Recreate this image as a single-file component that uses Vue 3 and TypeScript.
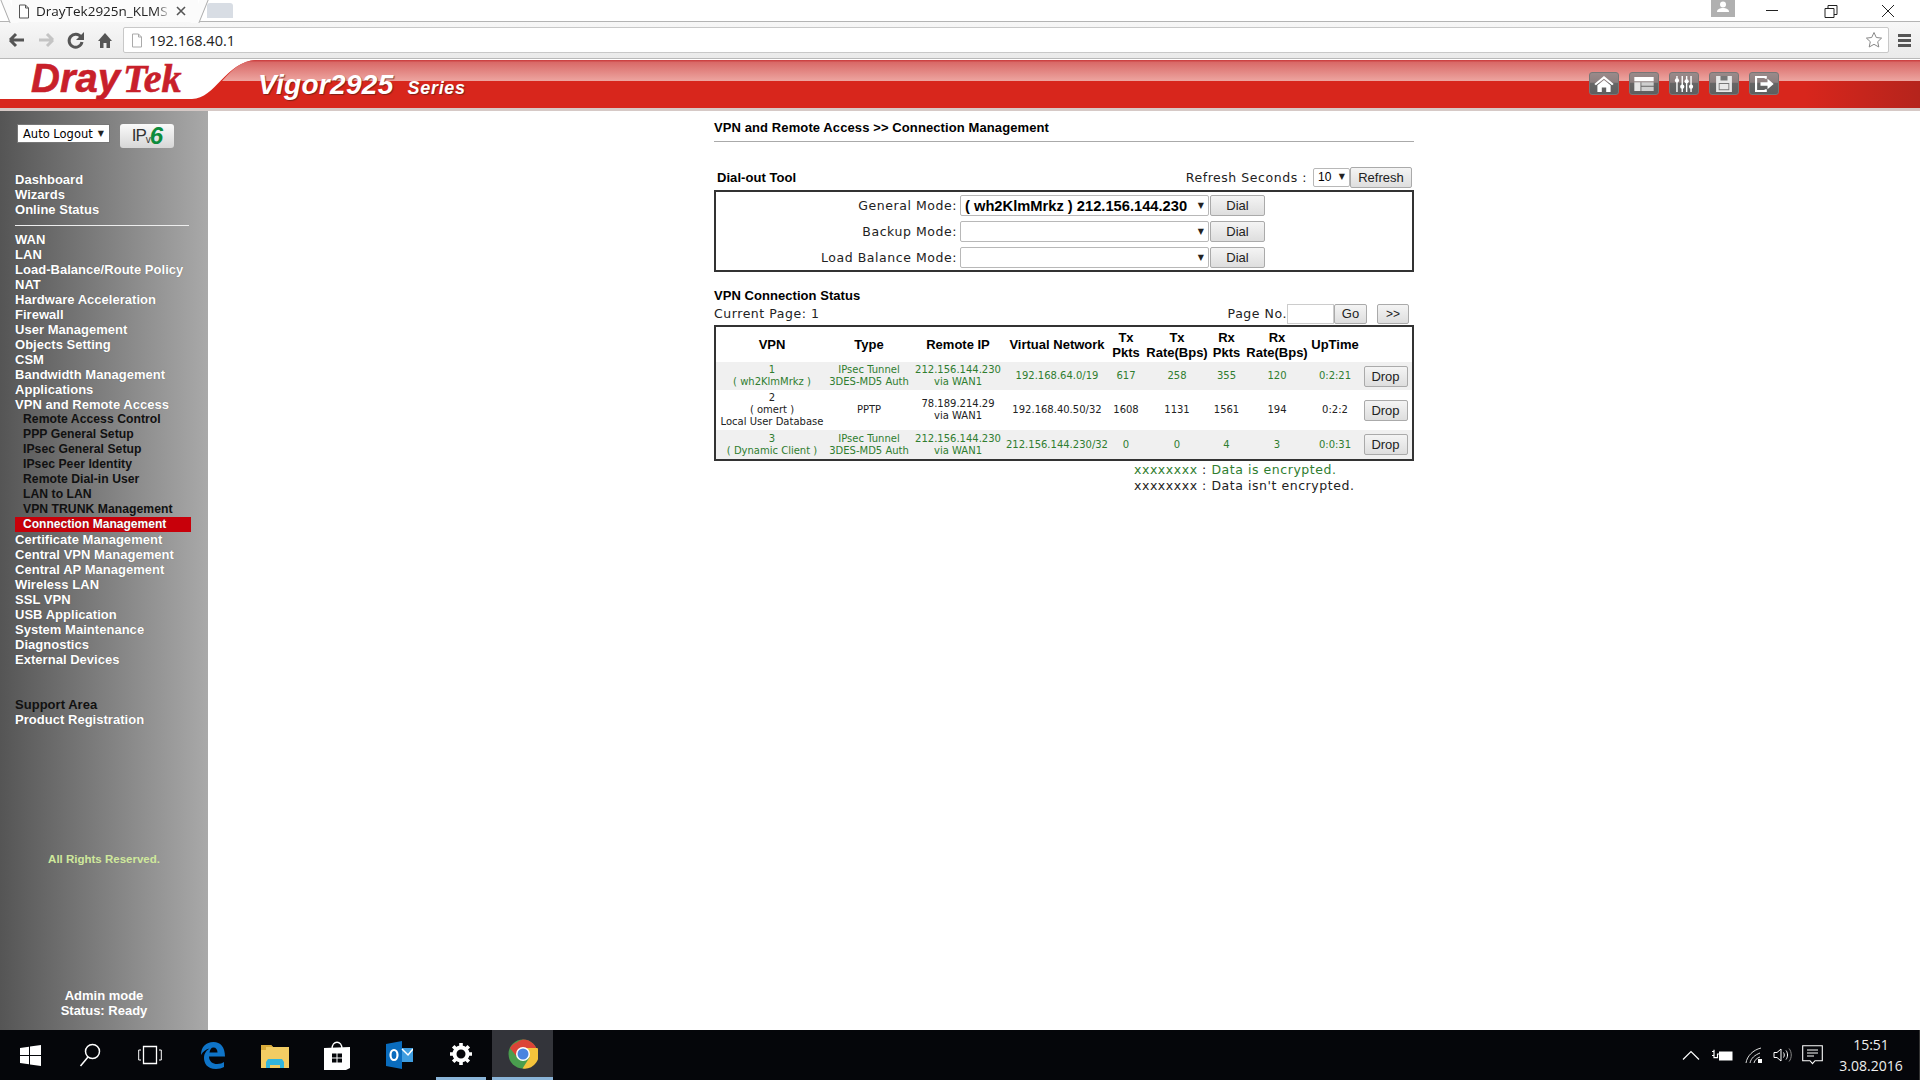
<script setup lang="ts">
type NavItem = { label: string; kind?: 'sub' | 'active' | 'dark' }

const topNav: NavItem[] = [{ label: 'Dashboard' }, { label: 'Wizards' }, { label: 'Online Status' }]

const mainNav: NavItem[] = [
  { label: 'WAN' },
  { label: 'LAN' },
  { label: 'Load-Balance/Route Policy' },
  { label: 'NAT' },
  { label: 'Hardware Acceleration' },
  { label: 'Firewall' },
  { label: 'User Management' },
  { label: 'Objects Setting' },
  { label: 'CSM' },
  { label: 'Bandwidth Management' },
  { label: 'Applications' },
  { label: 'VPN and Remote Access' },
  { label: 'Remote Access Control', kind: 'sub' },
  { label: 'PPP General Setup', kind: 'sub' },
  { label: 'IPsec General Setup', kind: 'sub' },
  { label: 'IPsec Peer Identity', kind: 'sub' },
  { label: 'Remote Dial-in User', kind: 'sub' },
  { label: 'LAN to LAN', kind: 'sub' },
  { label: 'VPN TRUNK Management', kind: 'sub' },
  { label: 'Connection Management', kind: 'active' },
  { label: 'Certificate Management' },
  { label: 'Central VPN Management' },
  { label: 'Central AP Management' },
  { label: 'Wireless LAN' },
  { label: 'SSL VPN' },
  { label: 'USB Application' },
  { label: 'System Maintenance' },
  { label: 'Diagnostics' },
  { label: 'External Devices' },
]

const supportNav: NavItem[] = [{ label: 'Support Area', kind: 'dark' }, { label: 'Product Registration' }]

const dialRows = [
  { label: 'General Mode:', value: '( wh2KlmMrkz ) 212.156.144.230' },
  { label: 'Backup Mode:', value: '' },
  { label: 'Load Balance Mode:', value: '' },
]

const columns = [
  { title: ['VPN'], width: 112 },
  { title: ['Type'], width: 82 },
  { title: ['Remote IP'], width: 96 },
  { title: ['Virtual Network'], width: 102 },
  { title: ['Tx', 'Pkts'], width: 36 },
  { title: ['Tx', 'Rate(Bps)'], width: 66 },
  { title: ['Rx', 'Pkts'], width: 33 },
  { title: ['Rx', 'Rate(Bps)'], width: 68 },
  { title: ['UpTime'], width: 48 },
  { title: [''], width: 53 },
]

const connections = [
  {
    vpn: ['1', '( wh2KlmMrkz )'],
    type: ['IPsec Tunnel', '3DES-MD5 Auth'],
    remote: ['212.156.144.230', 'via WAN1'],
    net: '192.168.64.0/19',
    stats: ['617', '258', '355', '120', '0:2:21'],
    encrypted: true,
  },
  {
    vpn: ['2', '( omert )', 'Local User Database'],
    type: ['PPTP'],
    remote: ['78.189.214.29', 'via WAN1'],
    net: '192.168.40.50/32',
    stats: ['1608', '1131', '1561', '194', '0:2:2'],
    encrypted: false,
  },
  {
    vpn: ['3', '( Dynamic Client )'],
    type: ['IPsec Tunnel', '3DES-MD5 Auth'],
    remote: ['212.156.144.230', 'via WAN1'],
    net: '212.156.144.230/32',
    stats: ['0', '0', '4', '3', '0:0:31'],
    encrypted: true,
  },
]
</script>

<template>
  <div class="screen">
    <div class="tabstrip">
      <div class="tab">
        <svg class="tab-doc" width="12" height="15" viewBox="0 0 12 15">
          <path d="M1.5 1h6l3 3v10h-9z M7.5 1v3h3" fill="#fff" stroke="#555" stroke-width="1" />
        </svg>
        <span class="tab-title">DrayTek2925n_KLMS</span>
        <svg class="tab-close" width="10" height="10" viewBox="0 0 10 10">
          <path d="M1 1l8 8M9 1l-8 8" stroke="#555" stroke-width="1.6" />
        </svg>
      </div>
      <div class="newtab"></div>
      <div class="winbtns">
        <div class="win-user">
          <svg width="14" height="12" viewBox="0 0 14 12">
            <circle cx="7" cy="3.5" r="3" fill="#fff" />
            <path d="M1 11c0-3 3-4 6-4s6 1 6 4z" fill="#fff" />
          </svg>
        </div>
        <svg class="win-ic" width="58" height="22" viewBox="0 0 58 22">
          <path d="M23 10.5h12" stroke="#222" stroke-width="1" />
        </svg>
        <svg class="win-ic" width="58" height="22" viewBox="0 0 58 22">
          <path d="M24 8.500h9v9h-9z M27 8.500v-3h9v9h-3" fill="none" stroke="#222" stroke-width="1" />
        </svg>
        <svg class="win-ic" width="58" height="22" viewBox="0 0 58 22">
          <path d="M23 5l12 12M35 5l-12 12" stroke="#222" stroke-width="1" />
        </svg>
      </div>
    </div>

    <div class="toolbar">
      <svg width="112" height="24" viewBox="0 0 112 24" class="nav-ic">
        <path d="M10 12h14M10 12l6-6M10 12l6 6" fill="none" stroke="#555" stroke-width="3" />
        <path d="M39 12h14M53 12l-6-6M53 12l-6 6" fill="none" stroke="#c4c4c4" stroke-width="3" />
        <path d="M81 9a6.500 6.500 0 1 0 1 5" fill="none" stroke="#555" stroke-width="3" />
        <path d="M84 4v8h-8z" fill="#555" />
        <path d="M98 13l7-8 7 8h-2v7h-3.500v-5h-3v5H100v-7z" fill="#555" />
      </svg>
      <div class="omnibox">
        <svg width="12" height="15" viewBox="0 0 12 15">
          <path d="M1.500 1h6l3 3v10h-9z M7.500 1v3h3" fill="#fff" stroke="#aaa" stroke-width="1" />
        </svg>
        <span class="url">192.168.40.1</span>
        <svg class="star" width="18" height="18" viewBox="0 0 18 18">
          <path d="M9 1.500l2.300 5 5.300.6-3.900 3.600 1.100 5.300L9 13.300 4.200 16l1.100-5.300L1.400 7.100l5.300-.6z" fill="#fff" stroke="#888" stroke-width="1" />
        </svg>
      </div>
      <div class="menu-ic"><i></i><i></i><i></i></div>
    </div>

    <header class="brand">
      <svg class="brand-bg" width="1920" height="52" viewBox="0 0 1920 52" preserveAspectRatio="none">
        <defs>
          <linearGradient id="gloss" x1="0" y1="0" x2="0" y2="1">
            <stop offset="0" stop-color="#c9393a" />
            <stop offset="0.12" stop-color="#d96a68" />
            <stop offset="1" stop-color="#eda5a0" />
          </linearGradient>
          <linearGradient id="shade" x1="0" y1="0" x2="1" y2="0">
            <stop offset="0" stop-color="#d8261c" />
            <stop offset="0.94" stop-color="#d8261c" />
            <stop offset="1" stop-color="#b5241c" />
          </linearGradient>
        </defs>
        <path d="M0 40H192C216 40 226 1 258 1H1920V50H0Z" fill="url(#shade)" />
        <path d="M222 22C234 9 242 1 258 1H1920V22Z" fill="url(#gloss)" />
        <path d="M0 49h1920v3H0z" fill="#d6c9c6" />
      </svg>
      <div class="logo"><span class="logo-dray">Dray</span><span class="logo-tek">Tek</span></div>
      <div class="model">Vigor2925<span class="model-series">Series</span></div>
      <div class="brand-icons">
        <button class="hicon" type="button" aria-label="Home">
          <svg width="24" height="20" viewBox="0 0 24 20">
            <path d="M1 10L12 1l11 9-1.800 1.500L12 4 2.800 11.500z" fill="#fff" />
            <path d="M4.500 11.500L12 5.500l7.500 6V19h-5v-5h-5v5h-5z" fill="#fff" />
          </svg>
        </button>
        <button class="hicon" type="button" aria-label="Layout">
          <svg width="24" height="20" viewBox="0 0 24 20">
            <path d="M1 2h22v5H1z" fill="#fff" />
            <path d="M1 8h7v10H1z" fill="#e6e6e6" />
            <path d="M9 8h14v4H9zM9 13h14v5H9z" fill="#cfcfcf" />
          </svg>
        </button>
        <button class="hicon" type="button" aria-label="Settings">
          <svg width="24" height="20" viewBox="0 0 24 20">
            <path d="M4 1v18M10 1v18M15 1v18M20 1v18" stroke="#fff" stroke-width="1.600" />
            <circle cx="4" cy="6" r="2.400" fill="#fff" />
            <circle cx="10" cy="13" r="2.400" fill="#fff" />
            <circle cx="15" cy="7" r="2.400" fill="#fff" />
            <circle cx="20" cy="13" r="2.400" fill="#fff" />
          </svg>
        </button>
        <button class="hicon" type="button" aria-label="Save">
          <svg width="24" height="20" viewBox="0 0 24 20">
            <path d="M3 1h18v18H3z" fill="#e8e8e8" />
            <path d="M8 1h8v5H8z" fill="#777" />
            <path d="M6 9h12v8H6z" fill="#777" />
            <path d="M7 10h10v6H7z" fill="#e8e8e8" />
          </svg>
        </button>
        <button class="hicon" type="button" aria-label="Logout">
          <svg width="24" height="20" viewBox="0 0 24 20">
            <path d="M14 4V2H3v16h11v-2" fill="none" stroke="#fff" stroke-width="2.400" />
            <path d="M8 8h8V4l7 6-7 6v-4H8z" fill="#fff" />
          </svg>
        </button>
      </div>
    </header>

    <div class="body">
      <aside class="sidebar">
        <div class="side-top">
          <div class="logout-select">Auto Logout<span class="arrow">▼</span></div>
          <div class="ipv6">IP<small>v</small><em>6</em></div>
        </div>
        <nav class="nav-group">
          <a v-for="item in topNav" :key="item.label" class="nav-item">{{ item.label }}</a>
        </nav>
        <hr class="side-rule" />
        <nav class="nav-group">
          <a
            v-for="item in mainNav"
            :key="item.label"
            class="nav-item"
            :class="item.kind ? `nav-item--${item.kind}` : ''"
            >{{ item.label }}</a
          >
        </nav>
        <nav class="nav-group nav-support">
          <a
            v-for="item in supportNav"
            :key="item.label"
            class="nav-item"
            :class="item.kind ? `nav-item--${item.kind}` : ''"
            >{{ item.label }}</a
          >
        </nav>
        <div class="rights">All Rights Reserved.</div>
        <div class="side-status">
          <div>Admin mode</div>
          <div>Status: Ready</div>
        </div>
      </aside>

      <main class="content">
        <h1 class="page-title">VPN and Remote Access &gt;&gt; Connection Management</h1>

        <div class="dial-head">
          <span class="section-name">Dial-out Tool</span>
          <div class="refresh">
            <span class="plain">Refresh Seconds :</span>
            <div class="sel sel--small">10<span class="arrow">▼</span></div>
            <button class="btn btn--refresh" type="button">Refresh</button>
          </div>
        </div>
        <div class="dial-box">
          <div v-for="row in dialRows" :key="row.label" class="dial-row">
            <span class="plain dial-label">{{ row.label }}</span>
            <div class="sel sel--wide">
              <b>{{ row.value }}</b><span class="arrow">▼</span>
            </div>
            <button class="btn btn--dial" type="button">Dial</button>
          </div>
        </div>

        <div class="section-name status-name">VPN Connection Status</div>
        <div class="page-row">
          <span class="plain">Current Page: 1</span>
          <div class="pager">
            <span class="plain">Page No.</span>
            <input class="page-input" type="text" />
            <button class="btn btn--go" type="button">Go</button>
            <button class="btn btn--next" type="button">&gt;&gt;</button>
          </div>
        </div>
        <table class="vpn-table">
          <colgroup>
            <col v-for="(col, i) in columns" :key="i" :style="{ width: col.width + 'px' }" />
          </colgroup>
          <thead>
            <tr>
              <th v-for="(col, i) in columns" :key="i">
                <div v-for="line in col.title" :key="line">{{ line }}</div>
              </th>
            </tr>
          </thead>
          <tbody>
            <tr
              v-for="(row, i) in connections"
              :key="i"
              :class="{ 'row--enc': row.encrypted, 'row--shade': i % 2 === 0 }"
            >
              <td><div v-for="line in row.vpn" :key="line">{{ line }}</div></td>
              <td><div v-for="line in row.type" :key="line">{{ line }}</div></td>
              <td><div v-for="line in row.remote" :key="line">{{ line }}</div></td>
              <td>{{ row.net }}</td>
              <td v-for="(stat, j) in row.stats" :key="j">{{ stat }}</td>
              <td><button class="btn btn--drop" type="button">Drop</button></td>
            </tr>
          </tbody>
        </table>
        <div class="legend">
          <div><span class="green">xxxxxxxx</span> : <span class="green">Data is encrypted.</span></div>
          <div>xxxxxxxx : Data isn't encrypted.</div>
        </div>
      </main>
    </div>

    <footer class="taskbar">
      <div class="task-apps">
        <div class="task-cell">
          <svg width="21" height="21" viewBox="0 0 21 21">
            <path d="M0 3l9-1.300V10H0zM10 1.500L21 0v10H10zM0 11h9v8.300L0 18zM10 11h11v10l-11-1.500z" fill="#fff" />
          </svg>
        </div>
        <div class="task-cell">
          <svg width="22" height="24" viewBox="0 0 22 24">
            <circle cx="13.500" cy="8.500" r="7" fill="none" stroke="#fff" stroke-width="1.500" />
            <path d="M9 14L1.500 23" stroke="#fff" stroke-width="1.500" />
          </svg>
        </div>
        <div class="task-cell">
          <svg width="24" height="20" viewBox="0 0 24 20">
            <path d="M5.500 1.500h13v17h-13z" fill="none" stroke="#fff" stroke-width="1.300" />
            <path d="M3 5H.7v10H3M21 5h2.300v10H21" fill="none" stroke="#fff" stroke-width="1" />
          </svg>
        </div>
        <div class="task-cell">
          <svg width="26" height="28" viewBox="0 0 26 28">
            <path
              d="M1 14C1 6 6 1 13.500 1 20.500 1 25 6 25 15.500H9c0 5 4 7.500 8 7.500 3 0 5.500-.8 7-2v5c-2 1.300-5 2-8 2C7 28 4 22 4 17 4 12 7 9 9.500 7.500 6 8 3 10.500 1 14zM9.500 11.500h8c0-3-1.500-5-4-5s-3.500 2-4 5z"
              fill="#0f74c8"
              fill-rule="evenodd"
            />
          </svg>
        </div>
        <div class="task-cell">
          <svg width="28" height="26" viewBox="0 0 28 26">
            <path d="M0 3h10l2 2h16v21H0z" fill="#f2cc63" />
            <path d="M0 3h10l2 2H5v3H0z" fill="#d9ab3a" />
            <path d="M7 17h14l2 3v6h-4v-3H9v3H5v-6z" fill="#33b5dc" />
          </svg>
        </div>
        <div class="task-cell">
          <svg width="26" height="30" viewBox="0 0 26 30">
            <path d="M8 9c0-9 10-9 10 0" fill="none" stroke="#fff" stroke-width="1.500" />
            <path d="M0 8l26-1v21l-4 2H0z" fill="#fff" />
            <path d="M8 13.500h4.500v4H8zM13.500 13.500H18v4h-4.500zM8 18.500h4.500v4H8zM13.500 18.500H18v4h-4.500z" fill="#05060a" />
          </svg>
        </div>
        <div class="task-cell">
          <svg width="27" height="28" viewBox="0 0 27 28">
            <path d="M0 3l16-3v28L0 25z" fill="#0a6cbe" />
            <path d="M16 7h11v14H16z" fill="#3f9de0" />
            <path d="M16 8l6 6 5-6" fill="none" stroke="#fff" stroke-width="1.500" />
            <ellipse cx="8" cy="14" rx="3.500" ry="5" fill="none" stroke="#fff" stroke-width="2.200" />
          </svg>
        </div>
        <div class="task-cell task-cell--open">
          <svg width="24" height="24" viewBox="0 0 24 24">
            <circle cx="12" cy="12" r="6.500" fill="none" stroke="#fff" stroke-width="4" />
            <path
              d="M12 1v5M12 18v5M1 12h5M18 12h5M4.200 4.200l3.600 3.600M16.200 16.200l3.600 3.600M4.200 19.800l3.600-3.600M16.200 7.800l3.600-3.600"
              stroke="#fff"
              stroke-width="3.600"
            />
          </svg>
        </div>
        <div class="task-cell task-cell--active">
          <svg width="30" height="30" viewBox="0 0 30 30">
            <circle cx="15" cy="15" r="14.500" fill="#4a9e4e" />
            <path d="M15 .500A14.500 14.500 0 0 1 29.500 15H15L8 4A14.500 14.500 0 0 1 15 .500z" fill="#dc4437" />
            <path d="M15 9h14.500a14.500 14.500 0 0 1-15 20.500l7-11z" fill="#f5c33b" />
            <path d="M8 3.500L15 15l-6 3L2 9a14.500 14.500 0 0 1 6-5.500z" fill="#dc4437" />
            <circle cx="15" cy="15" r="7" fill="#fff" />
            <circle cx="15" cy="15" r="5.500" fill="#4a84e0" />
          </svg>
        </div>
      </div>
      <div class="tray">
        <svg width="18" height="10" viewBox="0 0 18 10">
          <path d="M1 9.500L9 1.500l8 8" fill="none" stroke="#fff" stroke-width="1.200" />
        </svg>
        <svg width="21" height="12" viewBox="0 0 21 12">
          <path d="M7 2.500h13.500v9H7z" fill="#fff" />
          <path d="M0 2.500h2M0 6.500h2M2 .7v8h3.500V5H7" fill="none" stroke="#fff" stroke-width="1.200" />
        </svg>
        <svg width="18" height="17" viewBox="0 0 18 17">
          <path d="M1 16C2 9 8 3 16 1M5 16c1-5 5-8 10-10M9 16c.6-3 3-5 6-6" fill="none" stroke="#ddd" stroke-width="1" />
          <path d="M13 12h4v4h-4z" fill="#fff" />
        </svg>
        <svg class="tray-vol" width="20" height="16" viewBox="0 0 20 16">
          <path d="M1 5.500h3L8 2v12l-4-3.500H1z" fill="none" stroke="#fff" stroke-width="1" />
          <path d="M10.500 5.500c1 1.500 1 3.500 0 5M13 3.500c2 2.500 2 6.500 0 9" fill="none" stroke="#fff" stroke-width="1" />
          <path d="M16 1.500c3 3.500 3 9.500 0 13" fill="none" stroke="#888" stroke-width="1" />
        </svg>
        <svg width="21" height="20" viewBox="0 0 21 20">
          <path d="M.700.700h19.600v15H13l-2.500 3-2.500-3H.700z" fill="none" stroke="#fff" stroke-width="1.100" />
          <path d="M5 5h11M5 8h11M5 11h7" stroke="#fff" stroke-width="1" />
        </svg>
        <div class="clock">
          <div>15:51</div>
          <div>3.08.2016</div>
        </div>
      </div>
    </footer>
  </div>
</template>

<style>
html,
body {
  margin: 0;
  background: #fff;
  overflow: hidden;
}
</style>

<style scoped>
.screen {
  width: 1920px;
  height: 1080px;
  display: flex;
  flex-direction: column;
  overflow: hidden;
  font-family: 'Liberation Sans', Arial, sans-serif;
  color: #000;
  background: #fff;
}

/* browser chrome */
.tabstrip {
  height: 22px;
  display: flex;
  background: #fff;
  box-sizing: border-box;
  border-bottom: 1px solid #b4b4b4;
}

.tab {
  position: relative;
  width: 186px;
  margin-left: 12px;
  height: 22px;
  display: flex;
  align-items: center;
  padding-left: 6px;
  box-sizing: border-box;
  background: #fbfbfb;
}

.tab::before,
.tab::after {
  content: '';
  position: absolute;
  top: 0;
  bottom: -1px;
  width: 8px;
  background: #fbfbfb;
}

.tab::before {
  left: -7px;
  border-left: 1px solid #aaa;
  transform: skewX(22deg);
}

.tab::after {
  right: -6px;
  border-right: 1px solid #aaa;
  transform: skewX(-22deg);
}

.tab-doc,
.tab-title,
.tab-close {
  position: relative;
  z-index: 1;
}

.tab-title {
  margin-left: 6px;
  width: 136px;
  font-family: 'Open Sans', sans-serif;
  font-size: 13.5px;
  white-space: nowrap;
  overflow: hidden;
  color: #222;
  -webkit-mask-image: linear-gradient(to right, #000 88%, transparent);
  mask-image: linear-gradient(to right, #000 88%, transparent);
}

.tab-close {
  margin-left: 4px;
}

.newtab {
  width: 26px;
  height: 15px;
  margin: 3px 0 0 9px;
  background: #d8dde4;
  border-radius: 3px 3px 0 0;
}

.winbtns {
  margin-left: auto;
  padding-right: 3px;
  display: flex;
  align-items: flex-start;
  height: 21px;
}

.win-user {
  width: 24px;
  height: 17px;
  margin-right: 8px;
  background: #b0b0b0;
  display: flex;
  justify-content: center;
  padding-top: 1px;
  box-sizing: border-box;
}

.win-ic {
  display: block;
}

.toolbar {
  height: 37px;
  display: flex;
  align-items: center;
  background: linear-gradient(#f7f7f7, #eaeaea);
  border-bottom: 1px solid #b9b9b9;
  box-sizing: border-box;
  padding-right: 9px;
}

.nav-ic {
  flex: none;
  margin-right: 11px;
  display: block;
}

.omnibox {
  flex: 1;
  height: 26px;
  display: flex;
  align-items: center;
  padding-left: 7px;
  padding-right: 5px;
  background: #fff;
  border: 1px solid #c8c8c8;
  border-radius: 2px;
  box-sizing: border-box;
}

.url {
  margin-left: 6px;
  font-family: 'Open Sans', sans-serif;
  font-size: 14.5px;
  color: #222;
}

.star {
  margin-left: auto;
}

.menu-ic {
  width: 13px;
  margin-left: 9px;
  display: flex;
  flex-direction: column;
  gap: 2px;
}

.menu-ic i {
  display: block;
  height: 3px;
  background: #555;
}

/* router header */
.brand {
  position: relative;
  height: 52px;
  display: flex;
  align-items: center;
  background: #fff;
  flex: none;
}

.brand-bg {
  position: absolute;
  inset: 0;
}

.logo {
  position: relative;
  margin-left: 31px;
  margin-top: -14px;
  width: 224px;
  color: #c8202a;
  font-size: 40px;
  line-height: 38px;
  white-space: nowrap;
  -webkit-text-stroke: 0.6px #c8202a;
}

.logo-dray {
  font-family: 'Liberation Sans', sans-serif;
  font-weight: 700;
  font-style: italic;
}

.logo-tek {
  margin-left: 3px;
  font-family: 'Liberation Serif', serif;
  font-weight: 700;
  font-style: italic;
}

.model {
  position: relative;
  margin-left: 3px;
  color: #fff;
  font-size: 28px;
  font-weight: 700;
  font-style: italic;
  letter-spacing: 0.3px;
  white-space: nowrap;
  text-shadow: 1px 1px 1px rgba(90, 30, 20, 0.7);
}

.model-series {
  margin-left: 14px;
  font-size: 18px;
  letter-spacing: 0.7px;
}

.brand-icons {
  position: relative;
  margin-left: auto;
  margin-right: 141px;
  margin-top: -3px;
  display: flex;
  gap: 10px;
}

.hicon {
  width: 30px;
  height: 23px;
  padding: 0;
  display: flex;
  align-items: center;
  justify-content: center;
  border: 1px solid #777;
  border-radius: 3px;
  background: linear-gradient(#9a8a8a 0%, #8d7f7f 45%, #666 46%, #5e5e5e 100%);
}

.hicon svg {
  transform: scale(0.88);
}

/* sidebar */
.body {
  flex: 1;
  min-height: 0;
  display: flex;
}

.sidebar {
  width: 208px;
  flex: none;
  display: flex;
  flex-direction: column;
  padding-left: 15px;
  box-sizing: border-box;
  background: linear-gradient(to right, #555, #a9a9a9);
}

.side-top {
  height: 61px;
  display: flex;
  align-items: flex-start;
  padding: 13px 0 0 2px;
  box-sizing: border-box;
}

.logout-select {
  width: 93px;
  height: 19px;
  padding: 0 5px;
  display: flex;
  align-items: center;
  justify-content: space-between;
  box-sizing: border-box;
  background: #fff;
  border: 1px solid #777;
  font-family: 'DejaVu Sans', sans-serif;
  font-size: 11.500px;
}

.arrow {
  font-size: 8px;
  line-height: 1;
  font-family: 'DejaVu Sans', sans-serif;
  color: #222;
}

.ipv6 {
  width: 54px;
  height: 24px;
  margin-left: 10px;
  display: flex;
  align-items: center;
  justify-content: center;
  border-radius: 3px;
  background: linear-gradient(#fafafa, #d6d6d6);
  font-size: 17px;
  color: #333;
  letter-spacing: -1px;
}

.ipv6 small {
  font-size: 10px;
  align-self: flex-end;
  margin-bottom: 3px;
}

.ipv6 em {
  font-size: 24px;
  font-weight: 700;
  color: #0c8c3c;
  line-height: 24px;
}

.nav-group {
  display: flex;
  flex-direction: column;
}

.nav-item {
  height: 15px;
  line-height: 15px;
  font-size: 13px;
  letter-spacing: 0.03px;
  font-weight: 700;
  color: #fff;
  white-space: nowrap;
  text-shadow: 0 0 1px rgba(60, 60, 60, 0.6);
}

.nav-item--sub {
  padding-left: 8px;
  color: #111;
  font-size: 12.200px;
  text-shadow: none;
}

.nav-item--active {
  width: 176px;
  padding-left: 8px;
  box-sizing: border-box;
  background: #c8000a;
  font-size: 12px;
}

.nav-item--dark {
  color: #111;
  text-shadow: none;
}

.side-rule {
  width: 174px;
  height: 1px;
  margin: 8px 0 6px;
  border: 0;
  background: #eee;
  align-self: flex-start;
}

.nav-support {
  margin-top: 30px;
}

.rights {
  margin: 126px 0 0 -15px;
  width: 208px;
  text-align: center;
  font-size: 11.500px;
  font-weight: 700;
  color: #cfe89c;
}

.side-status {
  margin: auto 0 12px -15px;
  width: 208px;
  text-align: center;
  font-size: 13px;
  line-height: 15px;
  font-weight: 700;
  color: #fff;
}

/* main panel */
.content {
  width: 700px;
  margin-left: 506px;
  flex: none;
}

.page-title {
  height: 31px;
  margin: 0;
  padding-top: 9px;
  box-sizing: border-box;
  border-bottom: 1px solid #aaa;
  font-size: 13px;
  letter-spacing: 0.1px;
  line-height: 15px;
  font-weight: 700;
}

.dial-head {
  height: 26px;
  margin-top: 22px;
  display: flex;
  align-items: center;
  justify-content: space-between;
  padding: 0 2px 0 3px;
  box-sizing: border-box;
}

.section-name {
  font-size: 13px;
  letter-spacing: 0.05px;
  font-weight: 700;
}

.plain {
  font-family: 'DejaVu Sans', sans-serif;
  font-size: 12.500px;
  letter-spacing: 0.55px;
  white-space: nowrap;
  color: #222;
}

.refresh {
  display: flex;
  align-items: center;
}

.sel {
  display: flex;
  align-items: center;
  justify-content: space-between;
  box-sizing: border-box;
  background: #fff;
  border: 1px solid #b8b8b8;
  border-radius: 2px;
}

.sel--small {
  width: 37px;
  height: 19px;
  margin-left: 6px;
  padding: 0 4px;
  font-size: 12px;
}

.sel--wide {
  width: 249px;
  height: 21px;
  margin-left: 3px;
  padding: 0 4px;
  font-size: 14.700px;
}

.btn {
  padding: 0;
  font-family: 'Liberation Sans', sans-serif;
  font-size: 12px;
  color: #222;
  background: linear-gradient(#f4f4f4, #dedede);
  border: 1px solid #aaa;
  border-radius: 2px;
  box-sizing: border-box;
}

.btn--refresh {
  width: 62px;
  height: 21px;
  font-size: 13px;
}

.dial-box {
  height: 82px;
  padding: 3px 0 0;
  box-sizing: border-box;
  border: 2px solid #333;
  background: #fff;
  display: flex;
  flex-direction: column;
  gap: 5px;
}

.dial-row {
  height: 21px;
  display: flex;
  align-items: center;
}

.dial-label {
  width: 241px;
  text-align: right;
  flex: none;
}

.btn--dial {
  width: 55px;
  height: 21px;
  margin-left: 1px;
  font-size: 13px;
}

.status-name {
  margin-top: 16px;
  line-height: 16px;
}

.page-row {
  height: 19px;
  margin-bottom: 2px;
  display: flex;
  align-items: center;
  justify-content: space-between;
}

.pager {
  display: flex;
  align-items: center;
  padding-right: 5px;
}

.page-input {
  width: 47px;
  height: 20px;
  box-sizing: border-box;
  border: 1px solid #ccc;
  padding: 0;
  background: #fff;
}

.btn--go {
  width: 33px;
  height: 20px;
  font-size: 13px;
}

.btn--next {
  width: 32px;
  height: 20px;
  margin-left: 10px;
}

.vpn-table {
  width: 700px;
  height: 136px;
  box-sizing: border-box;
  table-layout: fixed;
  border-collapse: separate;
  border-spacing: 0;
  border: 2px solid #333;
  font-family: 'DejaVu Sans', sans-serif;
  font-size: 10px;
  line-height: 12px;
  text-align: center;
}

.vpn-table th {
  height: 35px;
  padding: 0;
  font-family: 'Liberation Sans', sans-serif;
  font-size: 13px;
  line-height: 15px;
  font-weight: 700;
  white-space: nowrap;
}

.vpn-table td {
  padding: 0;
  white-space: nowrap;
  color: #222;
}

.row--shade td {
  background: #f0f0f0;
}

.vpn-table .row--enc td {
  color: #2f7d2f;
}

.vpn-table tbody tr:nth-child(1) {
  height: 28px;
}

.vpn-table tbody tr:nth-child(2) {
  height: 40px;
}

.vpn-table tbody tr:nth-child(3) {
  height: 29px;
}

.btn--drop {
  width: 44px;
  height: 21px;
  display: block;
  margin: 0 auto;
  font-size: 13px;
}

.legend {
  margin: 1px 0 0 420px;
  font-family: 'DejaVu Sans', sans-serif;
  font-size: 12.500px;
  letter-spacing: 0.55px;
  line-height: 16px;
  color: #222;
}

.green {
  color: #2f7d2f;
}

/* windows taskbar */
.taskbar {
  height: 50px;
  flex: none;
  display: flex;
  justify-content: space-between;
  background: #05060a;
}

.task-apps {
  display: grid;
  grid-template-columns: 60px 60px 60px 65px 60px 63px 62px 62px 61px;
}

.task-cell {
  height: 50px;
  display: flex;
  align-items: center;
  justify-content: center;
  box-sizing: border-box;
}

.task-cell--open {
  border-bottom: 3px solid #8ab4d8;
  margin: 0 6px;
}

.task-cell--active {
  background: #33343a;
  border-bottom: 3px solid #8ab4d8;
}

.tray {
  height: 50px;
  display: flex;
  align-items: center;
  gap: 12px;
  padding-right: 6px;
  border-right: 1px solid #333;
  box-sizing: border-box;
}

.tray-vol {
  margin: 0 -3px 0 -2px;
}

.clock {
  width: 84px;
  margin-left: -6px;
  text-align: center;
  font-family: 'Open Sans', sans-serif;
  font-size: 14px;
  line-height: 21px;
  color: #eee;
}
</style>
